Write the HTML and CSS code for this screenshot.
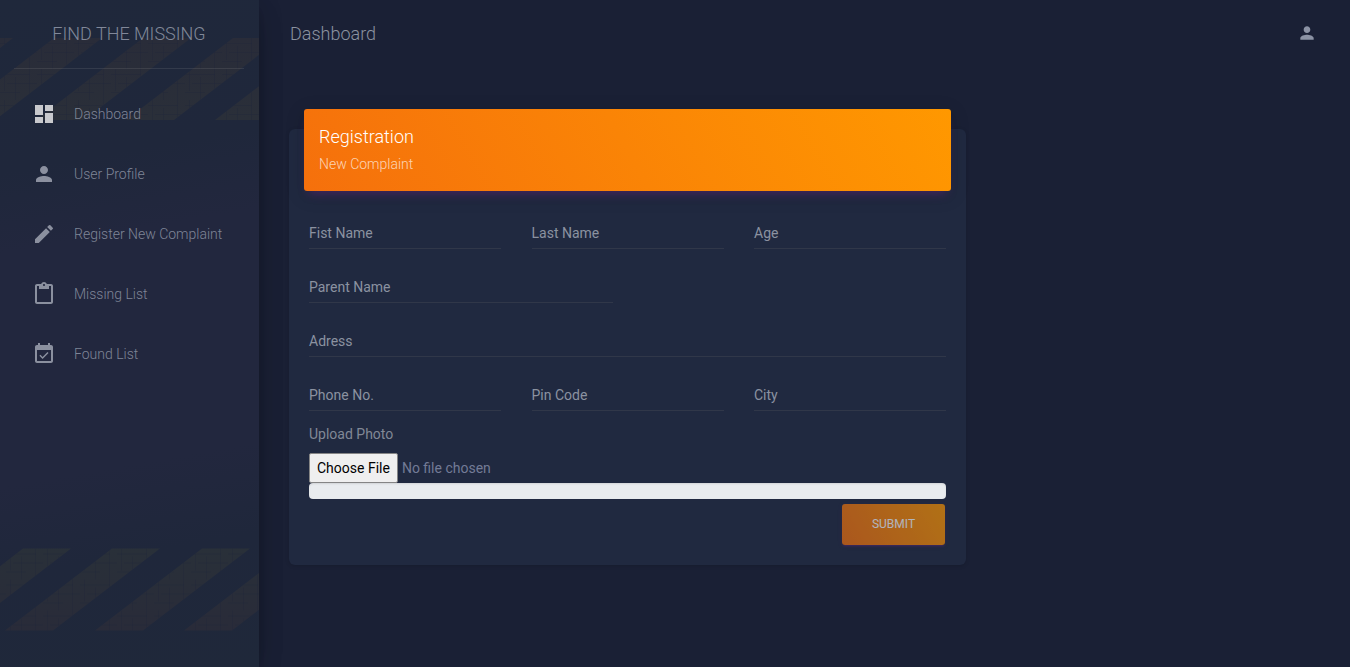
FILE: index.html
```html
<!DOCTYPE html>
<html lang="en">
<head>
<meta charset="utf-8">
<title>Dashboard</title>
<link rel="stylesheet" href="styles.css">
</head>
<body>
<div class="wrapper">
  <aside class="sidebar">
    <svg class="sidebar-art" viewBox="0 0 259 667" aria-hidden="true">
      <defs>
        <linearGradient id="amber-top" x1="0" y1="0" x2="0" y2="1">
          <stop offset="0" stop-color="#292c39"/><stop offset="1" stop-color="#2a2f39"/>
        </linearGradient>
        <linearGradient id="amber-bottom" x1="0" y1="0" x2="0" y2="1">
          <stop offset="0" stop-color="#293039"/><stop offset="1" stop-color="#292b39"/>
        </linearGradient>
        <pattern id="weave" width="37" height="31" patternUnits="userSpaceOnUse">
          <path d="M4.5 0V22M15.5 8V31M29.5 0V31M0 5.5H30M7 14.5H37M0 23.5H20" stroke="#1c2538" stroke-opacity=".28" fill="none"/>
        </pattern>
        <g id="stripes">
          <path d="M-36 0H13L-94 82H-143ZM54 0H102L-5 82H-53ZM143 0H191L84 82H36ZM233 0H281L174 82H126ZM322 0H370L263 82H215Z"/>
        </g>
      </defs>
      <use href="#stripes" y="38" fill="url(#amber-top)"/>
      <use href="#stripes" x="-31" y="548.5" fill="url(#amber-bottom)"/>
      <use href="#stripes" y="38" fill="url(#weave)"/>
      <use href="#stripes" x="-31" y="548.5" fill="url(#weave)"/>
    </svg>
    <div class="logo">FIND THE MISSING</div>
    <nav class="menu">
      <a class="item active"><svg viewBox="0 0 24 24"><path d="M3 13h8V3H3v10zm0 8h8v-6H3v6zm10 0h8V11h-8v10zm0-18v6h8V3h-8z"/></svg><span>Dashboard</span></a>
      <a class="item"><svg viewBox="0 0 24 24"><path d="M12 12c2.21 0 4-1.79 4-4s-1.79-4-4-4-4 1.79-4 4 1.79 4 4 4zm0 2c-2.67 0-8 1.34-8 4v2h16v-2c0-2.66-5.33-4-8-4z"/></svg><span>User Profile</span></a>
      <a class="item"><svg viewBox="0 0 24 24"><path d="M3 17.25V21h3.75L17.81 9.94l-3.75-3.75L3 17.25zM20.71 7.04a1 1 0 0 0 0-1.41l-2.34-2.34a1 1 0 0 0-1.41 0l-1.83 1.83 3.75 3.75 1.83-1.83z"/></svg><span>Register New Complaint</span></a>
      <a class="item"><svg viewBox="0 0 24 24"><path d="M19 2h-4.18C14.4.84 13.3 0 12 0S9.6.84 9.18 2H5c-1.1 0-2 .9-2 2v16c0 1.1.9 2 2 2h14c1.1 0 2-.9 2-2V4c0-1.1-.9-2-2-2zm-7 0c.55 0 1 .45 1 1s-.45 1-1 1-1-.45-1-1 .45-1 1-1zm7 18H5V4h2v3h10V4h2v16z"/></svg><span>Missing List</span></a>
      <a class="item"><svg viewBox="0 0 24 24"><path d="M16.53 11.06L15.47 10l-4.88 4.88-2.12-2.12-1.06 1.06L10.59 17l5.94-5.94zM19 3h-1V1h-2v2H8V1H6v2H5c-1.11 0-1.99.9-1.99 2L3 19c0 1.1.89 2 2 2h14c1.1 0 2-.9 2-2V5c0-1.1-.9-2-2-2zm0 16H5V8h14v11z"/></svg><span>Found List</span></a>
    </nav>
  </aside>
  <main class="main">
    <header class="topbar">
      <span class="page-title">Dashboard</span>
      <svg class="account" viewBox="0 0 24 24"><path d="M12 12c2.21 0 4-1.79 4-4s-1.79-4-4-4-4 1.79-4 4 1.79 4 4 4zm0 2c-2.67 0-8 1.34-8 4v2h16v-2c0-2.66-5.33-4-8-4z"/></svg>
    </header>
    <section class="card">
      <div class="card-header">
        <h4>Registration</h4>
        <p>New Complaint</p>
      </div>
      <form class="form">
        <div class="row thirds">
          <label class="field">Fist Name</label><label class="field">Last Name</label><label class="field">Age</label>
        </div>
        <div class="row half"><label class="field">Parent Name</label></div>
        <div class="row"><label class="field">Adress</label></div>
        <div class="row thirds">
          <label class="field">Phone No.</label><label class="field">Pin Code</label><label class="field">City</label>
        </div>
        <label class="upload-label" for="photo">Upload Photo</label>
        <input class="file" id="photo" type="file">
        <div class="progress"></div>
        <button class="submit" type="button">SUBMIT</button>
      </form>
    </section>
  </main>
</div>
</body>
</html>
```
FILE: styles.css
```css
* { box-sizing: border-box; }
body {
  margin: 0;
  background: #1a2035;
  color: #8b92a9;
  font-family: Roboto, "Liberation Sans", sans-serif;
  font-size: 14px;
  font-weight: 300;
  overflow: hidden;
}
.wrapper { display: flex; height: 667px; }
.sidebar {
  position: relative;
  z-index: 1;
  flex: 0 0 259px;
  background: linear-gradient(170deg, #1f283b 0, #1f273b 170px, #22273e 250px, #22273e 480px, #1f273b 570px, #1f283a 100%);
  box-shadow: 0 10px 30px -12px rgba(0,0,0,.42), 0 4px 25px 0 rgba(0,0,0,.12), 0 8px 10px -5px rgba(0,0,0,.2);
}
.sidebar-art { position: absolute; inset: 0; width: 259px; height: 667px; }
.logo {
  position: relative;
  height: 69px;
  margin: 0 15px 0 14px;
  padding-top: 19px;
  border-bottom: 1px solid rgba(180,180,180,.14);
  text-align: center;
  font-size: 18px;
  line-height: 30px;
  color: #818899;
}
.menu { position: relative; display: flex; flex-direction: column; gap: 10px; padding: 20px 15px 0; }
.item { display: flex; align-items: center; gap: 18px; height: 50px; padding-left: 17px; color: #7f8597; }
.item svg { width: 24px; height: 24px; fill: #8b909f; }
.item.active svg { fill: #c8c9cd; }
.main { flex: 1; padding: 0 30px; }
.topbar { display: flex; align-items: center; justify-content: space-between; height: 67px; padding: 0 3px 0 1px; }
.page-title { font-size: 18px; color: #8b92a0; }
.account { width: 20px; height: 20px; margin-bottom: 1px; fill: #8b92a4; }
.card {
  width: 677px;
  height: 436px;
  margin-top: 62px;
  padding: 0 15px;
  border-radius: 6px;
  background: #202940;
  box-shadow: 0 1px 4px 0 rgba(0,0,0,.14);
}
.card-header {
  position: relative;
  top: -20px;
  height: 82px;
  padding: 15px;
  border-radius: 3px;
  background: linear-gradient(60deg, #f5700c, #ff9800);
  box-shadow: 0 4px 20px 0 rgba(0,0,0,.14), 0 7px 10px -5px rgba(156,39,176,.4);
}
.card-header h4 { margin: 0; font-size: 18px; font-weight: 300; line-height: 25px; color: #fff; }
.card-header p { margin: 5px 0 0; line-height: 21px; color: rgba(255,255,255,.7); }
.form { display: flex; flex-direction: column; padding: 0 5px; font-weight: 400; }
.row { display: grid; height: 54px; }
.thirds { grid-template-columns: repeat(3, 192px); column-gap: 30.5px; }
.half { grid-template-columns: 304px; }
.field { height: 38px; padding-top: 12px; border-bottom: 1px solid #303749; line-height: 21px; color: #8b92a0; }
.upload-label { line-height: 21px; margin-top: -3px; color: #818896; }
.file { height: 30px; margin: 8px 0 0; font: 400 14px/21px Roboto, sans-serif; color: #737b96; }
.file::file-selector-button { height: 30px; margin: 0 4px 0 0; padding: 1px 7px; border: 1px solid #858585; border-radius: 2px; background: #efefef; color: #000; font: inherit; }
.progress { height: 16px; border-radius: 4px; background: #e9ecef; box-shadow: inset 0 1px 2px rgba(0,0,0,.1); }
.submit {
  align-self: flex-end;
  width: 103px;
  height: 41px;
  margin: 5px 1px 0 0;
  padding: 0 0 2px;
  border: 0;
  border-radius: 3px;
  background: linear-gradient(60deg, #f5700c, #ff9800);
  color: #fff;
  font: 400 12px/20px Roboto, sans-serif;
  opacity: .65;
  box-shadow: 0 2px 2px 0 rgba(156,39,176,.14), 0 3px 1px -2px rgba(156,39,176,.2), 0 1px 5px 0 rgba(156,39,176,.12);
}
```
